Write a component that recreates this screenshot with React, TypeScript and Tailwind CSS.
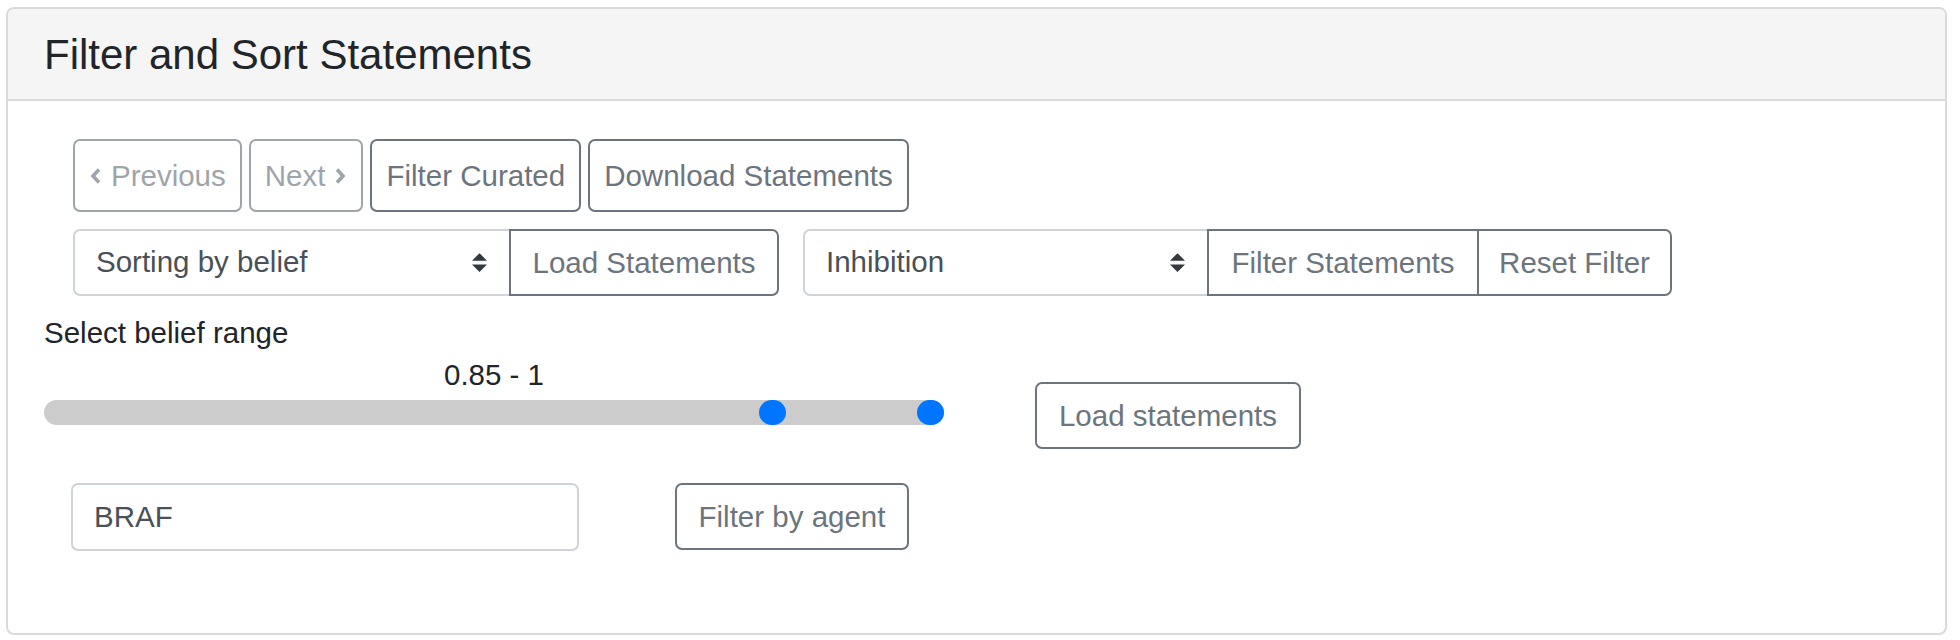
import React from 'react';

const font = { fontFamily: '"Liberation Sans", Arial, sans-serif' };

function SelectArrows() {
  return (
    <svg width="15" height="19" viewBox="0 0 4 5" className="shrink-0">
      <path d="M2 0L0 2h4zm0 5L0 3h4z" fill="#343a40" />
    </svg>
  );
}

function Chevron({ dir }: { dir: 'left' | 'right' }) {
  return (
    <svg width="13" height="18" viewBox="0 0 13 18" className="shrink-0">
      <path
        d={dir === 'left' ? 'M10 2.5L4 9l6 6.5' : 'M3 2.5L9 9l-6 6.5'}
        fill="none"
        stroke="currentColor"
        strokeWidth="3.6"
        strokeLinejoin="miter"
      />
    </svg>
  );
}

function OutlineButton({
  children,
  disabled = false,
  className = '',
}: {
  children: React.ReactNode;
  disabled?: boolean;
  className?: string;
}) {
  return (
    <button
      type="button"
      className={`flex items-center justify-center gap-[9px] border-2 border-[#6c757d] text-[#6c757d] bg-white px-[14px] text-[29.5px] leading-none whitespace-nowrap ${
        disabled ? 'opacity-65' : ''
      } ${className}`}
    >
      {children}
    </button>
  );
}

function SelectBox({ value, width }: { value: string; width: string }) {
  return (
    <div
      className={`flex h-[67px] items-center justify-between border-2 border-[#ced4da] rounded-l-[7px] pl-[21px] pr-[22px] text-[29.5px] text-[#495057] bg-white ${width}`}
    >
      <span>{value}</span>
      <SelectArrows />
    </div>
  );
}

export default function App() {
  return (
    <div className="w-[1960px] h-[640px] bg-white pt-[7px] pl-[6px]" style={font}>
      <div className="w-[1941px] h-[628px] border-2 border-[#dadada] rounded-[8px] overflow-hidden">
        <div className="h-[92px] bg-[#f5f5f5] border-b-2 border-[#dadada] flex items-center pl-[36px]">
          <h3 className="text-[42px] text-[#212529] leading-none pt-[2px]">Filter and Sort Statements</h3>
        </div>

        <div className="px-[36px] pt-[38px]">
          {/* pager and curation */}
          <div className="flex gap-[7px] pl-[29px]">
            <OutlineButton disabled className="h-[73px] rounded-[7px]">
              <Chevron dir="left" />
              <span>Previous</span>
            </OutlineButton>
            <OutlineButton disabled className="h-[73px] rounded-[7px]">
              <span>Next</span>
              <Chevron dir="right" />
            </OutlineButton>
            <OutlineButton className="h-[73px] rounded-[7px]">Filter Curated</OutlineButton>
            <OutlineButton className="h-[73px] rounded-[7px]">Download Statements</OutlineButton>
          </div>

          {/* sort and type filter */}
          <div className="flex gap-[24px] pl-[29px] mt-[17px]">
            <div className="flex">
              <SelectBox value="Sorting by belief" width="w-[438px]" />
              <OutlineButton className="h-[67px] w-[270px] rounded-r-[7px] -ml-[2px]">Load Statements</OutlineButton>
            </div>
            <div className="flex">
              <SelectBox value="Inhibition" width="w-[406px]" />
              <OutlineButton className="h-[67px] w-[272px] -ml-[2px]">Filter Statements</OutlineButton>
              <OutlineButton className="h-[67px] w-[195px] rounded-r-[7px] -ml-[2px]">Reset Filter</OutlineButton>
            </div>
          </div>

          {/* belief range */}
          <div className="flex items-start mt-[19px]">
            <div className="w-[900px] text-[#212529]">
              <div className="text-[29.5px] leading-[36px]">Select belief range</div>
              <div className="text-[29.5px] leading-[36px] text-center mt-[6px]">0.85 - 1</div>
              <div className="relative h-[25px] mt-[7px] rounded-full bg-[#cccccc]">
                <span className="absolute top-0 left-[715px] h-[25px] w-[27px] rounded-full bg-[#0075ff]" />
                <span className="absolute top-0 left-[873px] h-[25px] w-[27px] rounded-full bg-[#0075ff]" />
              </div>
            </div>
            <OutlineButton className="h-[67px] w-[266px] rounded-[7px] ml-[91px] mt-[67px]">Load statements</OutlineButton>
          </div>

          {/* agent filter */}
          <div className="flex items-start mt-[34px] pl-[27px] gap-[96px]">
            <div className="flex h-[68px] w-[508px] items-center border-2 border-[#ced4da] rounded-[7px] pl-[21px] text-[29.5px] text-[#495057]">
              BRAF
            </div>
            <OutlineButton className="h-[67px] w-[234px] rounded-[7px]">Filter by agent</OutlineButton>
          </div>
        </div>
      </div>
    </div>
  );
}
